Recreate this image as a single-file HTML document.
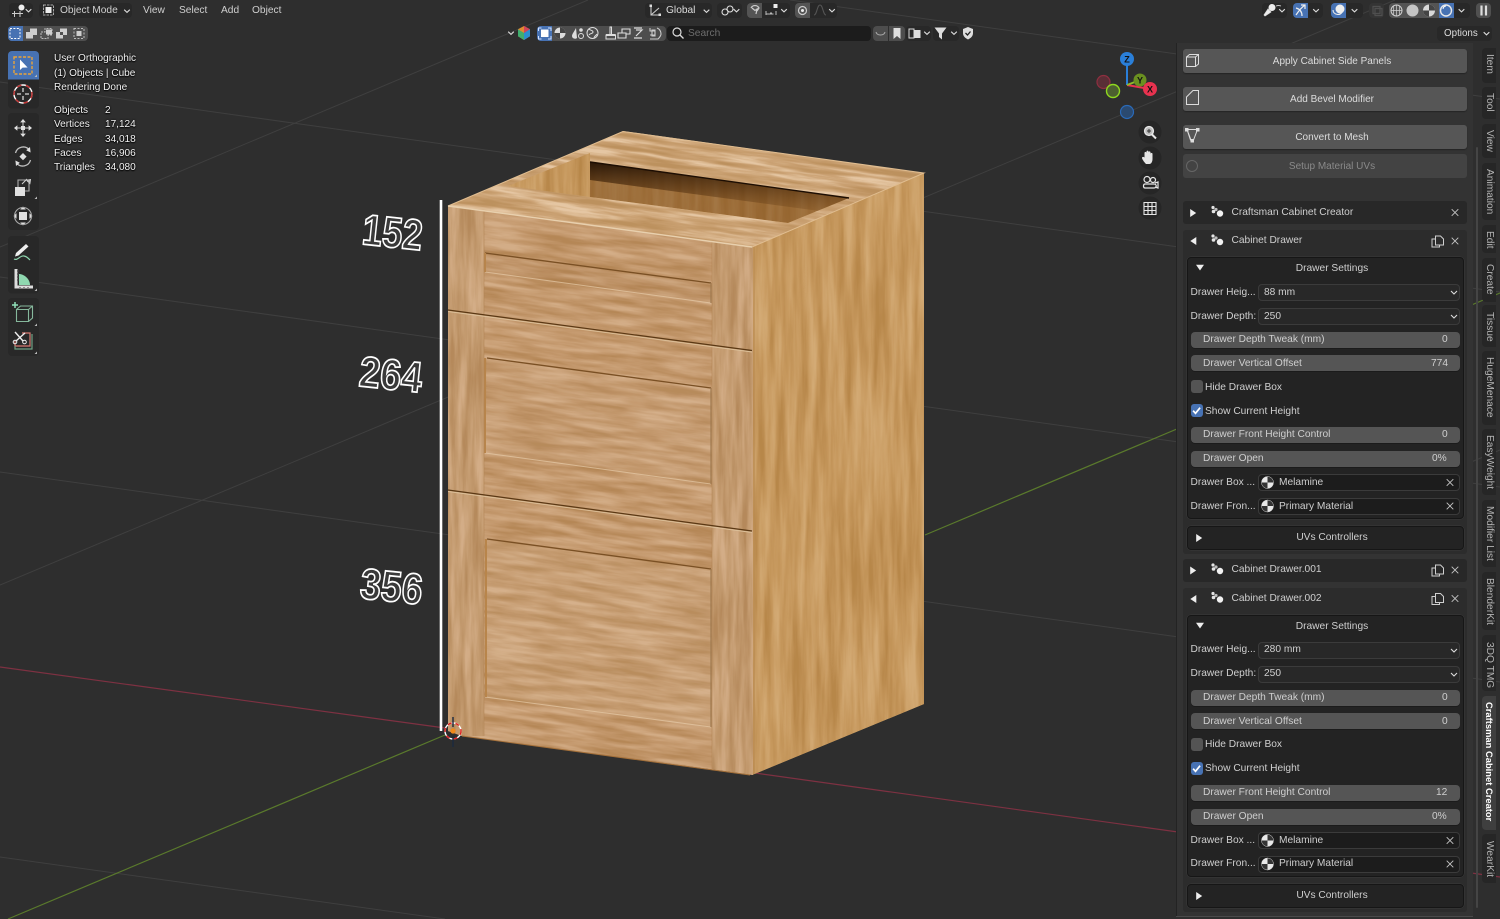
<!DOCTYPE html>
<html lang="en"><head><meta charset="utf-8"><title>Blender Cabinet</title>
<style>
html,body{margin:0;padding:0;width:1500px;height:919px;overflow:hidden;background:#2e2e2e}
body{position:relative;font-family:"Liberation Sans",sans-serif;font-size:10.2px;color:#cfcfcf}
.a,.t,.b{position:absolute;box-sizing:border-box}
.t{white-space:nowrap;line-height:14px;height:14px;margin-top:1px}
.c{text-align:center}
.w{color:#f2f2f2;text-shadow:0 0 2px #000,0 1px 1px #000;font-size:10.05px;margin-top:1.5px}
.box{background:#282828;border-radius:4px}
.btn{position:absolute;left:1183px;width:284px;height:24px;background:#565656;border-radius:3px;text-align:center;line-height:25px;color:#dcdcdc;box-shadow:0 1px 1px #252525;padding-left:14px;box-sizing:border-box;font-size:10px}
.hdr{position:absolute;left:1183px;width:284px;height:23px;background:#282828;border-radius:3px}
.pan{position:absolute;left:1183px;width:284px;height:324px;background:#2c2c2c;border-radius:3px}
.sub{position:absolute;box-sizing:border-box;left:1186.5px;width:277px;background:#232323;border:1px solid #161616;border-radius:4px;box-shadow:0 0 0 .5px #3a3a3a}
.dd{position:absolute;box-sizing:border-box;left:1257.5px;width:202px;height:17px;background:#282828;border:1px solid #3b3b3b;border-radius:4px}
.sl{position:absolute;left:1190.5px;width:269px;height:16px;background:#555;border-radius:4px;box-shadow:0 1px 0 #1b1b1b}
.inp{position:absolute;box-sizing:border-box;left:1257.5px;width:202px;height:17px;background:#1c1c1c;border:1px solid #3b3b3b;border-radius:4px}
.cb{position:absolute;left:1190.5px;width:12px;height:13px;background:#545454;border-radius:3px}
.cb.on{background:#4772b3}
.tab{position:absolute;left:1482px;width:14px;background:#262626;border-radius:4px 0 0 4px;overflow:hidden}
.tab span{position:absolute;left:14px;top:0;transform-origin:0 0;transform:rotate(90deg);white-space:nowrap;line-height:14px;color:#b4b4b4;text-align:center}
.tab.act{background:#3f3f3f}
.tab.act span{color:#fff;font-weight:bold;font-size:9.4px}
svg{position:absolute;overflow:visible}
.i{position:absolute}
</style></head><body>

<svg style="left:0;top:0" width="1500" height="919" viewBox="0 0 1500 919">
<defs>
<filter id="wh" x="0" y="0" width="1" height="1" color-interpolation-filters="sRGB">
<feTurbulence type="fractalNoise" baseFrequency="0.016 0.14" numOctaves="4" seed="11"/>
<feColorMatrix values="1.8 0 0 0 -.4 1.8 0 0 0 -.4 1.8 0 0 0 -.4 0 0 0 0 1"/>
<feComponentTransfer><feFuncR type="table" tableValues=".71 .77 .83"/><feFuncG type="table" tableValues=".53 .60 .68"/><feFuncB type="table" tableValues=".34 .43 .53"/></feComponentTransfer></filter>
<filter id="wv" x="0" y="0" width="1" height="1" color-interpolation-filters="sRGB">
<feTurbulence type="fractalNoise" baseFrequency="0.14 0.012" numOctaves="4" seed="5"/>
<feColorMatrix values="1.8 0 0 0 -.4 1.8 0 0 0 -.4 1.8 0 0 0 -.4 0 0 0 0 1"/>
<feComponentTransfer><feFuncR type="table" tableValues=".71 .77 .83"/><feFuncG type="table" tableValues=".54 .61 .68"/><feFuncB type="table" tableValues=".36 .44 .53"/></feComponentTransfer></filter>
<filter id="ws" x="0" y="0" width="1" height="1" color-interpolation-filters="sRGB">
<feTurbulence type="fractalNoise" baseFrequency="0.11 0.008" numOctaves="4" seed="21"/>
<feColorMatrix values="1.8 0 0 0 -.4 1.8 0 0 0 -.4 1.8 0 0 0 -.4 0 0 0 0 1"/>
<feComponentTransfer><feFuncR type="table" tableValues=".72 .78 .83"/><feFuncG type="table" tableValues=".53 .60 .67"/><feFuncB type="table" tableValues=".29 .37 .46"/></feComponentTransfer></filter>
<filter id="wt" x="0" y="0" width="1" height="1" color-interpolation-filters="sRGB">
<feTurbulence type="fractalNoise" baseFrequency="0.013 0.17" numOctaves="4" seed="31"/>
<feColorMatrix values="2.2 0 0 0 -.6 2.2 0 0 0 -.6 2.2 0 0 0 -.6 0 0 0 0 1"/>
<feComponentTransfer><feFuncR type="table" tableValues=".74 .80 .90"/><feFuncG type="table" tableValues=".57 .64 .78"/><feFuncB type="table" tableValues=".37 .46 .64"/></feComponentTransfer></filter>
<clipPath id="cFront"><polygon points="448,206 753,247 753,775 462,736 448,731"/></clipPath>
<clipPath id="cSide"><polygon points="752,247 924,173 924,704 752,775"/></clipPath>
<clipPath id="cTop"><polygon points="448,206 623,131 924,173 752,247"/></clipPath>
<clipPath id="cSL"><polygon points="448,206 484,211 484,736 462,736 448,731"/></clipPath>
<clipPath id="cSR"><polygon points="712,241 753,247 753,775 712,769"/></clipPath>
<clipPath id="cInL"><polygon points="508,186 590,153 590,197"/></clipPath>
<clipPath id="cInB"><polygon points="590,162 849,198 788,223 590,197"/></clipPath>
<linearGradient id="gIn" x1="0" y1="0" x2="0" y2="1"><stop offset="0" stop-color="#1e0e02" stop-opacity=".9"/><stop offset=".5" stop-color="#4a2a0c" stop-opacity=".6"/><stop offset="1" stop-color="#7a4d1e" stop-opacity=".25"/></linearGradient>
</defs>

<!-- grid lines -->
<g stroke="#3f3f3f" stroke-width="1" fill="none">
<path d="M790 0L1500 99"/><path d="M0 82L1500 292"/><path d="M0 277L1500 487"/><path d="M0 472L1500 682"/><path d="M0 857L445 919"/>
<path d="M0 247L588 0"/><path d="M0 585L1395 0"/>
<path d="M1500 450L1200 575"/>
</g>
<path d="M0 667L445 728M755 773L1500 877" stroke="#7e3142" stroke-width="1.2" fill="none"/>
<path d="M8 919L445 735M925 535L1500 293" stroke="#5a7a2c" stroke-width="1.2" fill="none"/>

<!-- dimension line -->
<path d="M441 200V731" stroke="#fff" stroke-width="2.6"/>

<!-- cabinet side -->
<g clip-path="url(#cSide)"><rect x="745" y="160" width="190" height="625" fill="#cf9e5c"/><rect x="745" y="160" width="190" height="625" filter="url(#ws)"/></g>
<!-- front -->
<g clip-path="url(#cFront)"><rect x="380" y="150" width="430" height="670" transform="rotate(7.7 600 480)" filter="url(#wh)"/></g>
<g clip-path="url(#cSL)"><rect x="445" y="200" width="42" height="540" filter="url(#wv)"/></g>
<g clip-path="url(#cSR)"><rect x="708" y="235" width="48" height="545" filter="url(#wv)"/></g>
<!-- panels -->
<g stroke="none">
<polygon points="485,253 711,283 711,303 485,272" fill="#7a4a18" fill-opacity=".08"/>
<polygon points="487,358 711,388 711,484 485,453" fill="#f4dcc0" fill-opacity=".05"/>
<polygon points="487,539 711,569 711,727 485,697" fill="#f4dcc0" fill-opacity=".07"/>
</g>
<g fill="none">
<path d="M485 253L711 283M487 358L711 388M487 539L711 569" stroke="#7a5024" stroke-width="1.3"/>
<path d="M485 272L711 303M485 453L711 484M485 697L711 727" stroke="#e6cba8" stroke-width="1" stroke-opacity=".7"/>
<path d="M485 253V272M485 358V453M486 539V697" stroke="#b8854b" stroke-width="2"/>
<path d="M711 283V303M711 388V484M711 569V727" stroke="#9f7a50" stroke-width="1.2"/>
<path d="M484 211V736M712 241V769" stroke="#b08454" stroke-width=".9" stroke-opacity=".6"/>
<path d="M448 310L752 350.5M448 490L752 531" stroke="#5a3814" stroke-width="1.2"/>
<path d="M448 311.5L752 352M448 491.5L752 532.5" stroke="#dcc09a" stroke-width=".9"/>
<path d="M754 243V774" stroke="#b98a50" stroke-width="1.2"/>
<path d="M462 736L750 775" stroke="#a4703a" stroke-width="1"/>
</g>
<!-- top -->
<g clip-path="url(#cTop)"><rect x="400" y="100" width="560" height="170" transform="rotate(7.9 680 190)" filter="url(#wt)"/></g>
<g clip-path="url(#cInL)"><rect x="505" y="150" width="90" height="50" filter="url(#ws)"/></g>
<g clip-path="url(#cInB)"><rect x="585" y="155" width="270" height="72" filter="url(#ws)"/><polygon points="590,162 849,198 788,223 590,197" fill="#7a4a1c" fill-opacity=".55"/><polygon points="590,162 849,198 849,215 590,180" fill="url(#gIn)"/></g>
<path d="M590 162L849 198" stroke="#1d0e03" stroke-width="1.4" fill="none"/>
<path d="M448 206L623 131.5L924 173L752 247" stroke="#e0bd90" stroke-width="1" fill="none"/>
<path d="M448 206L752 247" stroke="#e8d0ae" stroke-width="1.4" fill="none"/>

<!-- numbers -->
<g font-family="Liberation Sans,sans-serif" font-weight="bold" fill="#3a3a3a" stroke="#fff" stroke-width="1.7">
<text transform="translate(361,244) rotate(6) scale(.86,1.03)" font-size="42">152</text>
<text transform="translate(358,386) rotate(6) scale(.9,1.03)" font-size="42">264</text>
<text transform="translate(359,598) rotate(6) scale(.89,1.03)" font-size="42">356</text>
</g>

<!-- 3D cursor -->
<g fill="none"><circle cx="453" cy="731" r="8" stroke="#fff" stroke-width="1.4"/><circle cx="453" cy="731" r="8" stroke="#e02020" stroke-width="1.4" stroke-dasharray="4 4"/>
<path d="M453 717V727M453 736V747" stroke="#1a2a40" stroke-width="1.4"/></g>
<circle cx="453" cy="731" r="2.6" fill="#f08a1a"/>

<!-- axis gizmo -->
<g>
<circle cx="1103.5" cy="82" r="6.5" fill="#5a2e36" stroke="#8f2f40" stroke-width="1.2"/>
<circle cx="1127" cy="112" r="6.5" fill="#2b4a70" stroke="#2a6ab8" stroke-width="1.2"/>
<path d="M1127 85V62" stroke="#2a7fd9" stroke-width="2"/>
<path d="M1127 85L1150 89" stroke="#e8324f" stroke-width="2"/>
<path d="M1127 85L1140 80" stroke="#8bbb2a" stroke-width="2"/>
<circle cx="1140" cy="80" r="6.5" fill="#6a9020"/>
<circle cx="1113" cy="91" r="6.5" fill="#4c6030" stroke="#8fd81f" stroke-width="1.4"/>
<circle cx="1150" cy="89" r="7" fill="#e8324f"/>
<circle cx="1127" cy="59" r="7" fill="#2a7fd9"/>
<g font-family="Liberation Sans,sans-serif" font-size="9" font-weight="bold" text-anchor="middle" fill="#111">
<text x="1127" y="62.5">Z</text><text x="1150" y="92.5">X</text><text x="1140" y="83.5">Y</text></g>
</g>
<!-- nav buttons -->
<g fill="#262626"><circle cx="1150" cy="132" r="11.5"/><circle cx="1150" cy="158" r="11.5"/><circle cx="1150" cy="183" r="11.5"/><circle cx="1150" cy="208" r="11.5"/></g>
<g fill="none" stroke="#e6e6e6">
<circle cx="1149" cy="131" r="4.4" stroke-width="1.4" fill="#bbb"/><path d="M1152 134.5L1156 138.5" stroke-width="2"/><path d="M1147 131h4M1149 129v4" stroke="#333" stroke-width="1"/>
<path d="M1146 164c-2-2-4-5-4-6 0-1.400 1.500-1.500 2.500-.5V153c0-1.500 2-1.500 2 0v-1.200c0-1.500 2-1.500 2 0v.7c0-1.500 2-1.500 2 0V154c0-1.500 2-1.500 2 0v5c0 3-1.500 5-3 5z" fill="#e6e6e6" stroke="none"/>
<path d="M1145 184h9c3 0 3 4 0 4h-9c-2 0-2-4 0-4zM1155 183l3-1v6l-3-1" stroke-width="1.2"/><circle cx="1147" cy="179.500" r="3" stroke-width="1.200"/><circle cx="1153" cy="180" r="2.500" stroke-width="1.200"/>
<path d="M1144 202.500h12v12h-12zM1148 202.500v12M1152 202.500v12M1144 206.500h12M1144 210.500h12" stroke-width="1.100"/>
</g>

<!-- toolbar -->
<g fill="#282828"><rect x="8" y="51" width="31" height="57.500" rx="4"/><rect x="8" y="113" width="31" height="117" rx="4"/><rect x="8" y="236" width="31" height="57.500" rx="4"/><rect x="8" y="298" width="31" height="58" rx="4"/></g>
<path d="M12 51h23a4 4 0 0 1 4 4v24.500H8V55a4 4 0 0 1 4-4z" fill="#4772b3"/>
<rect x="14" y="57" width="18" height="17" fill="none" stroke="#e8a33a" stroke-width="1.400" stroke-dasharray="3 1.500"/>
<path d="M20 59.500L20 70l2.600-2.400 5-.1z" fill="#fff"/>
<g fill="none" stroke="#d8d8d8" stroke-width="1.300">
<circle cx="23" cy="94" r="9" stroke="#fff" stroke-width="1.400"/><circle cx="23" cy="94" r="9" stroke="#c03030" stroke-width="1.400" stroke-dasharray="4.500 4.500"/>
<path d="M23 88v4M23 96v4M17 94h4M25 94h4"/>
<!-- move -->
<path d="M23 122v12M17 128h12" stroke-width="1"/>
<!-- rotate -->
<path d="M15.500 153a8 8 0 0 1 14-3M30.500 160a8 8 0 0 1-14 3" stroke="#c0c0c0"/>
</g>
<g fill="#e0e0e0">
<path d="M23 119l-2.800 3.400h5.600zM23 137l-2.800-3.400h5.600zM14 128l3.400-2.800v5.600zM32 128l-3.400-2.800v5.600z"/><rect x="21" y="126" width="4" height="4"/>
<path d="M23 153l3.600 3.600L23 160.200 19.400 156.600z"/><path d="M30 147l.6 5.500-4.400-2.200zM16 166l-.6-5.500 4.400 2.200z"/>
<rect x="15" y="187" width="10" height="9"/><path d="M31 179l-5.500.8 4.700 4.700z"/>
<rect x="19" y="212" width="8" height="8"/><path d="M23 206.500l2.800 3h-5.600zM23 225.500l-2.800-3h5.600zM13.500 216l3-2.800v5.600zM32.500 216l-3-2.800v5.600z"/>
</g>
<g fill="none" stroke="#cfcfcf" stroke-width="1.100"><path d="M18 187v-7h11v11h-4" stroke="#aaa"/><path d="M22 184l5-5"/><circle cx="23" cy="216" r="8.500" stroke="#aaa"/></g>
<g fill="#9a9a9a"><path d="M37 77v-2.500l-2.500 2.500zM37 199v-2.500l-2.500 2.500zM37 291v-2.500l-2.500 2.500zM37 326v-2.500l-2.500 2.500zM37 354v-2.500l-2.500 2.500z" fill="#bbb"/></g>
<!-- annotate -->
<path d="M16 253l10-9 2.500 2.500-10 9-3.500 1z" fill="#eee"/>
<path d="M14 259c4 2 6-4 10-3 3 .5 5 3 6 4" fill="none" stroke="#8fd8b0" stroke-width="1.200"/>
<!-- measure -->
<path d="M16 269v18h17" fill="none" stroke="#ddd" stroke-width="3"/>
<path d="M19 285v-11c5 0 11 5 11 11z" fill="#8fd8b0"/>
<path d="M17 271h2M17 274h2M17 277h2M17 280h2M20 287v1M24 287v1M28 287v1" stroke="#444"/>
<!-- add cube -->
<g fill="none" stroke="#7fc4a0" stroke-width="1.100"><path d="M16.500 309.500h12v12h-12zM16.500 309.500l4-3.500h12v12l-4 3.500M28.500 309.500l4-3.500" stroke="#86b89c"/></g>
<path d="M15 302v6M12 305h6" stroke="#8fe0b8" stroke-width="1.500"/>
<!-- knife -->
<g fill="none" stroke-width="1.200"><path d="M22 333h8v13H15v-5" stroke="#d87a72"/><path d="M15 346v3h17v-15" stroke="#6ea084"/></g>
<path d="M15 332l8 9M25 333l-9 8" stroke="#eee" stroke-width="1.400" fill="none"/><circle cx="15" cy="342" r="1.800" fill="none" stroke="#eee"/><circle cx="24.500" cy="342" r="1.800" fill="none" stroke="#eee"/>
</svg>

<!-- Viewport text -->
<div class="t w" style="left:54px;top:50px">User Orthographic</div>
<div class="t w" style="left:54px;top:65px">(1) Objects | Cube</div>
<div class="t w" style="left:54px;top:79.500px">Rendering Done</div>
<div class="t w" style="left:54px;top:102px">Objects</div><div class="t w" style="left:105px;top:102px">2</div>
<div class="t w" style="left:54px;top:116.500px">Vertices</div><div class="t w" style="left:105px;top:116.500px">17,124</div>
<div class="t w" style="left:54px;top:131px">Edges</div><div class="t w" style="left:105px;top:131px">34,018</div>
<div class="t w" style="left:54px;top:145.500px">Faces</div><div class="t w" style="left:105px;top:145.500px">16,906</div>
<div class="t w" style="left:54px;top:159.500px">Triangles</div><div class="t w" style="left:105px;top:159.500px">34,080</div>

<!-- Header row 1 -->
<div class="a box" style="left:9px;top:3px;width:24px;height:15px"></div>
<div class="a box" style="left:39px;top:3px;width:93px;height:15px"></div>
<div class="t" style="left:60px;top:3px">Object Mode</div>
<div class="t" style="left:143px;top:3px">View</div>
<div class="t" style="left:179px;top:3px">Select</div>
<div class="t" style="left:221px;top:3px">Add</div>
<div class="t" style="left:252px;top:3px">Object</div>
<div class="a box" style="left:645px;top:3px;width:67px;height:15px"></div>
<div class="t" style="left:666px;top:3px;color:#ddd">Global</div>
<div class="a box" style="left:717px;top:3px;width:25px;height:15px"></div>
<div class="a box" style="left:747px;top:3px;width:43px;height:15px"></div>
<div class="a" style="left:747px;top:3px;width:15px;height:15px;background:#545454;border-radius:4px 0 0 4px"></div>
<div class="a box" style="left:795px;top:3px;width:42px;height:15px"></div>
<div class="a" style="left:795px;top:3px;width:15px;height:15px;background:#545454;border-radius:4px 0 0 4px"></div>

<div class="a box" style="left:1262px;top:3px;width:25px;height:15px"></div>
<div class="a box" style="left:1293px;top:3px;width:30px;height:15px"></div>
<div class="a" style="left:1293px;top:3px;width:15px;height:15px;background:#4772b3;border-radius:4px 0 0 4px"></div>
<div class="a box" style="left:1331px;top:3px;width:32px;height:15px"></div>
<div class="a" style="left:1331px;top:3px;width:15px;height:15px;background:#4772b3;border-radius:4px 0 0 4px"></div>
<div class="a box" style="left:1369px;top:3px;width:15px;height:15px;background:#343434"></div>
<div class="a box" style="left:1389px;top:3px;width:81px;height:15px"></div>
<div class="a" style="left:1389px;top:3px;width:65px;height:15px;background:#545454;border-radius:4px 0 0 4px"></div>
<div class="a" style="left:1438.500px;top:3px;width:15.500px;height:15px;background:#4772b3"></div>
<div class="a box" style="left:1476px;top:3px;width:15px;height:15px;background:#505050"></div>

<!-- Header row 2 -->
<div class="a" style="left:8px;top:26px;width:80px;height:15px;background:#4f4f4f;border-radius:4px"></div>
<div class="a" style="left:8px;top:26px;width:15px;height:15px;background:#4772b3;border-radius:4px 0 0 4px"></div>
<div class="a" style="left:537px;top:26px;width:129px;height:15px;background:#4d4d4d;border-radius:4px"></div>
<div class="a" style="left:537px;top:26px;width:15px;height:15px;background:#4772b3;border-radius:4px 0 0 4px"></div>
<div class="a" style="left:667px;top:26px;width:204px;height:15px;background:#1c1c1c;border-radius:4px"></div>
<div class="t" style="left:688px;top:26px;color:#6e6e6e">Search</div>
<div class="a" style="left:873px;top:26px;width:15px;height:15px;background:#4d4d4d;border-radius:4px 0 0 4px"></div>
<div class="a" style="left:888.500px;top:26px;width:16px;height:15px;background:#4d4d4d;border-radius:0 4px 4px 0"></div>
<div class="a box" style="left:906px;top:26px;width:25px;height:15px"></div>
<div class="a box" style="left:933px;top:26px;width:26px;height:15px"></div>
<div class="a box" style="left:1437px;top:26px;width:55px;height:15px"></div>
<div class="t" style="left:1444px;top:26px;color:#ddd;font-size:9.8px">Options</div>

<svg style="left:0;top:0;pointer-events:none" width="1500" height="44" viewBox="0 0 1500 44">
<defs><path id="chev" d="M-2.800-1.300L0 1.400 2.800-1.300" fill="none" stroke="#ddd" stroke-width="1.100"/></defs>
<g><use href="#chev" x="28.500" y="10.500"/><use href="#chev" x="127" y="11"/><use href="#chev" x="706.500" y="11"/><use href="#chev" x="736.500" y="10.500"/><use href="#chev" x="784" y="10.500"/><use href="#chev" x="832" y="10.500"/>
<use href="#chev" x="1282" y="10.500"/><use href="#chev" x="1316" y="10.500"/><use href="#chev" x="1354.500" y="10.500"/><use href="#chev" x="1461.500" y="10.500"/><use href="#chev" x="511" y="33"/><use href="#chev" x="927" y="33"/><use href="#chev" x="954" y="33"/><use href="#chev" x="1486.500" y="33.500"/></g>
<!-- editor type -->
<circle cx="21.500" cy="7.500" r="3" fill="#eee"/><path d="M12 13.500h11M14.500 11v6M20 11v6" stroke="#ccc" fill="none"/>
<!-- object mode -->
<rect x="43.500" y="5" width="10" height="10" fill="none" stroke="#aaa" stroke-dasharray="2.500 1"/><rect x="45.500" y="7" width="6" height="6" fill="#eee"/>
<!-- select modes -->
<rect x="10" y="28.500" width="10" height="10" fill="none" stroke="#fff" stroke-dasharray="2 1.400"/>
<path d="M26 32h4v-3.500h7V35h-4v3.500h-7z" fill="#cfcfcf"/>
<path d="M41 32h4v-3.500h7V35h-4v3.500h-7z" fill="none" stroke="#bbb" stroke-dasharray="2 1"/><path d="M46 29.500h6v5h-6z" fill="#cfcfcf"/>
<path d="M56 32h4v-3.500h7V35h-4v3.500h-7z" fill="#cfcfcf"/><rect x="60" y="32" width="3" height="3" fill="#4f4f4f"/>
<rect x="74" y="28.500" width="10" height="10" fill="none" stroke="#bbb" stroke-dasharray="2 1.500"/><rect x="76.500" y="31" width="5" height="5" fill="#cfcfcf"/>
<!-- global icon etc -->
<path d="M651 6v9h9M651 15l8-7" fill="none" stroke="#ccc" stroke-width="1.100"/><rect x="649.500" y="4.500" width="2.500" height="2.500" fill="#ddd"/><rect x="658.500" y="13.500" width="2.500" height="2.500" fill="#ddd"/>
<circle cx="725" cy="12" r="3" fill="none" stroke="#ddd" stroke-width="1.100"/><circle cx="730" cy="9" r="3" fill="none" stroke="#ddd" stroke-width="1.100"/>
<path d="M751 8a4.500 4.500 0 0 1 8 0l-2 3M752 8l3 2.500 2-1.500-1 5" fill="none" stroke="#ccc" stroke-width="1.200"/>
<path d="M766 11v4M776 11v4M770 13h2M765.500 14h8" stroke="#bbb" fill="none"/><rect x="773.500" y="4" width="4" height="4" fill="#eee"/>
<circle cx="802.500" cy="10.500" r="4" fill="none" stroke="#ccc" stroke-width="1.200"/><circle cx="802.500" cy="10.500" r="1.500" fill="#eee"/>
<path d="M814 15c3 0 3-10 6-10s3 10 6 10" fill="none" stroke="#555" stroke-width="1.100"/>
<!-- viewport overlay -->
<circle cx="1272" cy="7.500" r="3.500" fill="#eee"/><path d="M1264 15l4-6 3 3-6 4zM1276 6a5 3 0 0 1 5 0" fill="#eee" stroke="#ddd" stroke-width=".8"/>
<path d="M1296 15c4-6 6-8 9-10M1301 5h4v4M1296 8c4 1 6 4 6 8" fill="none" stroke="#eee" stroke-width="1.200"/>
<circle cx="1340" cy="9" r="4.500" fill="#eee"/><path d="M1333 10c0 5 8 6 9 2" fill="none" stroke="#eee" stroke-width="1.100"/>
<path d="M1373 6.500h7v7h-7zM1375 8.500h7v7h-7z" fill="none" stroke="#4f4f4f" stroke-width="1.200"/>
<circle cx="1396.500" cy="10.500" r="5.500" fill="none" stroke="#cfcfcf"/><path d="M1391 10.500h11M1396.500 5v11M1393.500 6v9M1399.500 6v9" stroke="#cfcfcf" stroke-width=".7" fill="none"/>
<circle cx="1412.500" cy="10.500" r="6" fill="#c4c4c4"/>
<circle cx="1429" cy="10.500" r="6" fill="#d8d8d8"/><path d="M1429 10.500v-6a6 6 0 0 1 6 6zM1429 10.500h-6a6 6 0 0 0 6 6z" fill="#444"/>
<circle cx="1446" cy="10.500" r="5.500" fill="none" stroke="#e8e8e8" stroke-width="1.400"/><path d="M1443 9a3.500 3.500 0 0 1 3-3" stroke="#fff" fill="none"/>
<path d="M1481.500 5.500v10M1486 5.500v10" stroke="#ddd" stroke-width="2.200"/>
<!-- row 2 center -->
<path d="M524 26l6 3.300v7L524 40l-6-3.700v-7z" fill="#e08a30"/><path d="M524 26l6 3.300v7L524 33z" fill="#d0445a"/><path d="M518 29.300L524 33v7l-6-3.700z" fill="#3fae6e"/><path d="M524 33l6-3.700v7l-6 3.700z" fill="#2a8fd0"/>
<rect x="541" y="29.500" width="7.500" height="7.500" fill="#fff"/><path d="M538.500 31v-3h3M548 28h3v3M551 36v3h-3M541.500 39h-3v-3" stroke="#d0e0ff" fill="none"/>
<circle cx="560" cy="33" r="5.500" fill="#ddd"/><path d="M560 33v-5.500a5.500 5.500 0 0 1 5.500 5.500zM560 33h-5.500a5.500 5.500 0 0 0 5.500 5.500z" fill="#444"/>
<path d="M576 28c-2 4-4 6-4 8a3 3 0 0 0 5 2z" fill="#ddd"/><circle cx="581" cy="36" r="2.500" fill="none" stroke="#ddd"/><circle cx="581" cy="30" r="1.800" fill="#ddd"/>
<circle cx="592.500" cy="33" r="5.500" fill="none" stroke="#ddd"/><path d="M589 29c2 2 4 1 4 3s-3 1-4 3M594 38c0-2 2-2 3-4" stroke="#ddd" fill="none"/>
<path d="M606 39v-4h4v-8h1.500v8h4v4z" fill="none" stroke="#ddd"/><path d="M606 35h9.500" stroke="#ddd" stroke-width="2"/>
<path d="M618 33h8v5h-8zM622 33v-4h8v5h-4" fill="none" stroke="#ddd" stroke-width="1.100"/>
<path d="M634 28h8M634 38h8M636 30h6l-6 6" fill="none" stroke="#ddd" stroke-width="1.200"/>
<path d="M650 28v3h5M650 35h5M655 30h-3v6h3zM657 28c3 1 4 4 4 6s-2 4-3 5H650" fill="none" stroke="#ccc" stroke-width="1.100"/>
<circle cx="677" cy="32" r="4" fill="none" stroke="#ddd" stroke-width="1.200"/><path d="M680 35l3.500 3.500" stroke="#ddd" stroke-width="1.300"/>
<path d="M876 32c1 4 8 4 9 0" stroke="#aaa" fill="none"/>
<path d="M893.500 28h7v11l-3.500-3-3.500 3z" fill="#ddd"/>
<path d="M909 29h5v9h-5zM914 30.500h6v3h-6zM914 34.500h6v3h-6z" fill="none" stroke="#ddd"/><rect x="914" y="30" width="6" height="3" fill="#ddd"/><rect x="914" y="34.500" width="6" height="3" fill="#ddd"/>
<path d="M934.500 27.500h12l-4.500 6v6l-3-2.500v-3.500z" fill="#ddd"/>
<path d="M968 27l5 2v4c0 3-2 5-5 6.500-3-1.500-5-3.500-5-6.500v-4z" fill="#ddd"/><path d="M965.500 33l2 2 3-3.500" stroke="#222" stroke-width="1.300" fill="none"/>
</svg>

<!-- Sidebar -->
<div class="a" style="left:1176px;top:43px;width:297px;height:873px;background:#333;border-left:1px solid #232323;box-shadow:0 1px 0 #4a4a4a"></div>
<div class="a" style="left:1476px;top:147px;width:2px;height:761px;background:#454545;border-radius:1px"></div>

<div class="btn" style="top:48.500px">Apply Cabinet Side Panels</div>
<div class="btn" style="top:86.500px">Add Bevel Modifier</div>
<div class="btn" style="top:124.500px">Convert to Mesh</div>
<div class="btn" style="top:154px;background:#434343;color:#8a8a8a;box-shadow:none">Setup Material UVs</div>

<div class="hdr" style="top:201px"></div>
<div class="t" style="left:1231.500px;top:204.500px">Craftsman Cabinet Creator</div>

<!-- Panel 1 -->
<div class="pan" style="top:229.500px"></div>
<div class="t" style="left:1231.500px;top:233px">Cabinet Drawer</div>
<div class="sub" style="top:256.500px;height:262px"></div>
<div class="t c" style="left:1186px;width:292px;top:260.500px">Drawer Settings</div>
<div class="t" style="left:1190.500px;top:284.500px">Drawer Heig...</div>
<div class="dd" style="top:283.500px"></div><div class="t" style="left:1264px;top:284.500px">88 mm</div>
<div class="t" style="left:1190.500px;top:308.500px">Drawer Depth:</div>
<div class="dd" style="top:307.500px"></div><div class="t" style="left:1264px;top:308.500px">250</div>
<div class="sl" style="top:331.500px"></div><div class="t" style="left:1203px;top:332px">Drawer Depth Tweak (mm)</div><div class="t" style="left:1442px;top:332px">0</div>
<div class="sl" style="top:355px"></div><div class="t" style="left:1203px;top:355.500px">Drawer Vertical Offset</div><div class="t" style="left:1431px;top:355.500px">774</div>
<div class="cb" style="top:380px"></div><div class="t" style="left:1205px;top:379.500px">Hide Drawer Box</div>
<div class="cb on" style="top:404px"></div><div class="t" style="left:1205px;top:403.500px">Show Current Height</div>
<div class="sl" style="top:427px"></div><div class="t" style="left:1203px;top:427px">Drawer Front Height Control</div><div class="t" style="left:1442px;top:427px">0</div>
<div class="sl" style="top:450.500px"></div><div class="t" style="left:1203px;top:451px">Drawer Open</div><div class="t" style="left:1432px;top:451px">0%</div>
<div class="t" style="left:1190.500px;top:475px">Drawer Box ...</div>
<div class="inp" style="top:474px"></div><div class="t" style="left:1279px;top:475px">Melamine</div>
<div class="t" style="left:1190.500px;top:498.500px">Drawer Fron...</div>
<div class="inp" style="top:498px"></div><div class="t" style="left:1279px;top:498.500px">Primary Material</div>
<div class="sub" style="top:526px;height:24px"></div>
<div class="t c" style="left:1186px;width:292px;top:530px">UVs Controllers</div>

<div class="hdr" style="top:558.500px"></div>
<div class="t" style="left:1231.500px;top:562px">Cabinet Drawer.001</div>

<!-- Panel 2 -->
<div class="pan" style="top:587.500px"></div>
<div class="t" style="left:1231.500px;top:591px">Cabinet Drawer.002</div>
<div class="sub" style="top:614.500px;height:262px"></div>
<div class="t c" style="left:1186px;width:292px;top:618.500px">Drawer Settings</div>
<div class="t" style="left:1190.500px;top:642px">Drawer Heig...</div>
<div class="dd" style="top:641.500px"></div><div class="t" style="left:1264px;top:642px">280 mm</div>
<div class="t" style="left:1190.500px;top:666px">Drawer Depth:</div>
<div class="dd" style="top:665.500px"></div><div class="t" style="left:1264px;top:666px">250</div>
<div class="sl" style="top:689.500px"></div><div class="t" style="left:1203px;top:690px">Drawer Depth Tweak (mm)</div><div class="t" style="left:1442px;top:690px">0</div>
<div class="sl" style="top:713px"></div><div class="t" style="left:1203px;top:713.500px">Drawer Vertical Offset</div><div class="t" style="left:1442px;top:713.500px">0</div>
<div class="cb" style="top:738px"></div><div class="t" style="left:1205px;top:737px">Hide Drawer Box</div>
<div class="cb on" style="top:762px"></div><div class="t" style="left:1205px;top:761px">Show Current Height</div>
<div class="sl" style="top:784.500px"></div><div class="t" style="left:1203px;top:785px">Drawer Front Height Control</div><div class="t" style="left:1436px;top:785px">12</div>
<div class="sl" style="top:808.500px"></div><div class="t" style="left:1203px;top:809px">Drawer Open</div><div class="t" style="left:1432px;top:809px">0%</div>
<div class="t" style="left:1190.500px;top:832.500px">Drawer Box ...</div>
<div class="inp" style="top:832px"></div><div class="t" style="left:1279px;top:832.500px">Melamine</div>
<div class="t" style="left:1190.500px;top:856px">Drawer Fron...</div>
<div class="inp" style="top:856px"></div><div class="t" style="left:1279px;top:856px">Primary Material</div>
<div class="sub" style="top:884px;height:24px"></div>
<div class="t c" style="left:1186px;width:292px;top:888px">UVs Controllers</div>

<!-- Sidebar icons -->
<svg style="left:0;top:0;pointer-events:none" width="1500" height="919" viewBox="0 0 1500 919">
<defs>
<g id="nodes" fill="#e4e4e4"><circle cx="-4.500" cy="-5" r="1.600"/><circle cx="-1.500" cy="-3" r="1.600" fill="#bbb"/><circle cx="-4" cy="-1" r="1.800"/><circle cx="2.500" cy="1" r="3.200" fill="#f2f2f2"/></g>
<path id="xx" d="M-3.300-3.300L3.300 3.300M3.300-3.300L-3.300 3.300" stroke="#c4c4c4" stroke-width=".9" fill="none"/>
<g id="dup" fill="none" stroke="#cfcfcf" stroke-width="1"><path d="M-2-5h5l3 3v6h-8z"/><path d="M-2-2h-3.500v8h7.500v-2"/></g>
<path id="tr" d="M-2.800-4L3.200 0-2.800 4z" fill="#eee"/>
<path id="tl" d="M2.800-4L-3.200 0 2.800 4z" fill="#eee"/>
<path id="td" d="M-4-2.800h8L0 3z" fill="#eee"/>
<g id="mat"><circle r="6" fill="#e8e8e8"/><path d="M0 0V-6a6 6 0 0 1 6 6zM0 0H-6a6 6 0 0 0 6 6z" fill="#333"/><circle r="6" fill="none" stroke="#cfcfcf" stroke-width=".5"/></g>
<path id="ch" d="M-3-1.500L0 1.500 3-1.500" fill="none" stroke="#ddd" stroke-width="1.100"/>
<path id="ck" d="M-3.400 .2L-1 2.800 3.600-2.800" fill="none" stroke="#fff" stroke-width="1.700"/>
</defs>
<!-- top buttons -->
<g fill="none" stroke="#ddd" stroke-width="1">
<path d="M1186.500 57h9v9.500h-9zM1186.500 57l3-2.500h9v9.500l-3 2.500M1195.500 57l3-2.500"/>
<path d="M1186.500 104.500V97l6.500-6.500h5.500v14z"/>
<path d="M1187 129.500h10.500L1193.500 140h-3zM1187 129.500l4 10.500"/><rect x="1185.500" y="128.500" width="2.500" height="2.500" fill="#ddd"/><rect x="1196.500" y="128.500" width="2.500" height="2.500" fill="#ddd"/><rect x="1191" y="139.500" width="2.500" height="2.500" fill="#ddd"/>
<circle cx="1192" cy="166" r="5.500" stroke="#666"/>
</g>
<!-- panel headers -->
<use href="#tr" x="1193" y="213"/><use href="#nodes" x="1217.500" y="212.500"/><use href="#xx" x="1455" y="212.500"/>
<use href="#tl" x="1193.500" y="241"/><use href="#nodes" x="1217.500" y="241"/><use href="#dup" x="1437.500" y="241"/><use href="#xx" x="1455" y="241"/>
<use href="#td" x="1200" y="267.500"/>
<use href="#ch" x="1454" y="292.500"/><use href="#ch" x="1454" y="316.500"/>
<use href="#ck" x="1196.500" y="410.500"/>
<use href="#mat" x="1267.500" y="482.500"/><use href="#xx" x="1450" y="482.500"/>
<use href="#mat" x="1267.500" y="506"/><use href="#xx" x="1450" y="506"/>
<use href="#tr" x="1199" y="538"/>
<use href="#tr" x="1193" y="570.500"/><use href="#nodes" x="1217.500" y="570"/><use href="#dup" x="1437.500" y="570"/><use href="#xx" x="1455" y="570"/>
<use href="#tl" x="1193.500" y="599"/><use href="#nodes" x="1217.500" y="598.500"/><use href="#dup" x="1437.500" y="598.500"/><use href="#xx" x="1455" y="598.500"/>
<use href="#td" x="1200" y="625.500"/>
<use href="#ch" x="1454" y="650.500"/><use href="#ch" x="1454" y="674.500"/>
<use href="#ck" x="1196.500" y="768.500"/>
<use href="#mat" x="1267.500" y="840.500"/><use href="#xx" x="1450" y="840.500"/>
<use href="#mat" x="1267.500" y="864"/><use href="#xx" x="1450" y="864"/>
<use href="#tr" x="1199" y="896"/>
</svg>

<!-- Tabs -->
<div class="tab" style="top:48px;height:34.500px"><span style="top:6px">Item</span></div>
<div class="tab" style="top:87px;height:32px"><span style="top:6px">Tool</span></div>
<div class="tab" style="top:124px;height:34px"><span style="top:6px">View</span></div>
<div class="tab" style="top:162.500px;height:57.500px"><span style="top:6px">Animation</span></div>
<div class="tab" style="top:225px;height:28px"><span style="top:6px">Edit</span></div>
<div class="tab" style="top:258px;height:43.500px"><span style="top:6px">Create</span></div>
<div class="tab" style="top:305px;height:41.500px"><span style="top:7px">Tissue</span></div>
<div class="tab" style="top:351px;height:74px"><span style="top:6px">HugeMenace</span></div>
<div class="tab" style="top:429px;height:66px"><span style="top:6px">EasyWeight</span></div>
<div class="tab" style="top:500px;height:66.500px"><span style="top:6px">Modifier List</span></div>
<div class="tab" style="top:571.500px;height:58.500px"><span style="top:6px">BlenderKit</span></div>
<div class="tab" style="top:635px;height:55.500px"><span style="top:7px">3DQ TMG</span></div>
<div class="tab act" style="top:696px;height:134px"><span style="top:6px">Craftsman Cabinet Creator</span></div>
<div class="tab" style="top:834px;height:49px"><span style="top:7px">WearKit</span></div>
</body></html>
